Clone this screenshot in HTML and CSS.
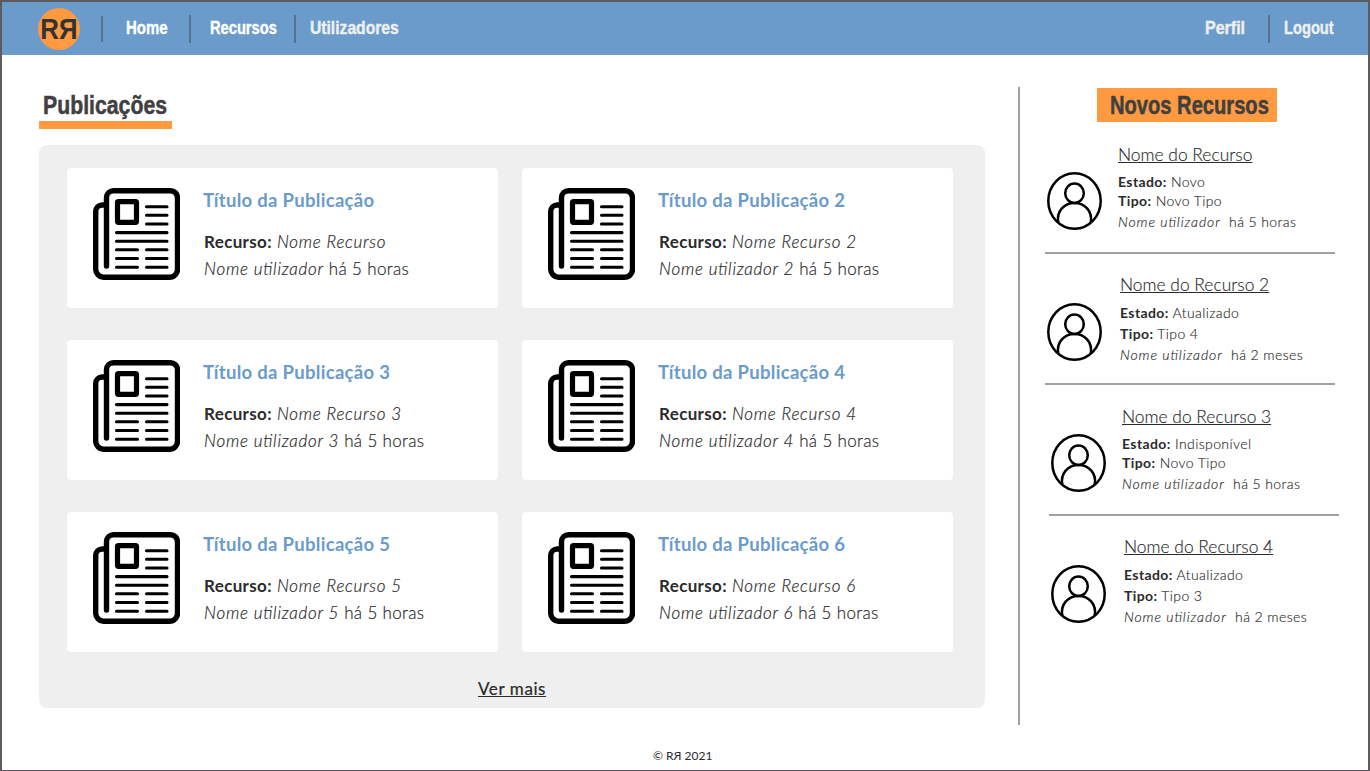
FILE: index.html
```
<!DOCTYPE html>
<html lang="pt">
<head>
<meta charset="utf-8">
<title>Publicações</title>
<link rel="stylesheet" href="styles.css">
</head>
<body>
<svg class="defs" aria-hidden="true">
  <symbol id="news" viewBox="0 0 87 92">
    <g fill="none" stroke="#000" stroke-linecap="round">
      <path stroke-width="5.4" d="M13.5 78V9.5a7 7 0 0 1 7-6.8h57a7 7 0 0 1 7 7V81a8 8 0 0 1-8 8.200H10.500A8 8 0 0 1 2.700 81V23.500a6.500 6.500 0 0 1 6.500-6.500h4"/>
      <rect x="24.500" y="13.700" width="19" height="20.600" rx="1" stroke-width="5.200"/>
      <path stroke-width="3.100" d="M53.500 18.700H74M53.500 27.300H74M53.500 36H74M23.500 44.600H74M23.500 53.200H74M23.500 61.800H44.500M53.500 61.800H74M23.500 70.500H44.500M53.500 70.500H74M23.500 79.200H44.500M53.500 79.200H74"/>
    </g>
  </symbol>
  <symbol id="user" viewBox="0 0 55 58">
    <g fill="none" stroke="#000" stroke-width="2.500">
      <ellipse cx="27.500" cy="29" rx="26.200" ry="27.700"/>
      <ellipse cx="27.500" cy="21.300" rx="9.300" ry="9.700"/>
      <path d="M11.300 50.500C9.200 39.500 17 31 27.500 31S45.800 39.500 43.700 50.500"/>
    </g>
  </symbol>
</svg>
<div class="page">
  <header class="bar">
    <div class="logo"><span>RЯ</span></div>
    <i class="sep s1"></i>
    <a class="nav home"><span>Home</span></a>
    <i class="sep"></i>
    <a class="nav rec"><span>Recursos</span></a>
    <i class="sep"></i>
    <a class="nav util dim"><span>Utilizadores</span></a>
    <a class="nav perfil dim"><span>Perfil</span></a>
    <i class="sep"></i>
    <a class="nav logout dim"><span>Logout</span></a>
  </header>
  <div class="content">
    <main>
      <h1 class="title"><span>Publicações</span></h1>
      <section class="panel">
        <div class="cards">
          <article class="card"><svg class="news"><use href="#news"/></svg><div><h2>Título da Publicação</h2><p class="r"><b>Recurso:</b> <em>Nome Recurso</em></p><p class="u"><em>Nome utilizador</em> há 5 horas</p></div></article>
          <article class="card"><svg class="news"><use href="#news"/></svg><div><h2>Título da Publicação 2</h2><p class="r"><b>Recurso:</b> <em>Nome Recurso 2</em></p><p class="u"><em>Nome utilizador 2</em> há 5 horas</p></div></article>
          <article class="card"><svg class="news"><use href="#news"/></svg><div><h2>Título da Publicação 3</h2><p class="r"><b>Recurso:</b> <em>Nome Recurso 3</em></p><p class="u"><em>Nome utilizador 3</em> há 5 horas</p></div></article>
          <article class="card"><svg class="news"><use href="#news"/></svg><div><h2>Título da Publicação 4</h2><p class="r"><b>Recurso:</b> <em>Nome Recurso 4</em></p><p class="u"><em>Nome utilizador 4</em> há 5 horas</p></div></article>
          <article class="card"><svg class="news"><use href="#news"/></svg><div><h2>Título da Publicação 5</h2><p class="r"><b>Recurso:</b> <em>Nome Recurso 5</em></p><p class="u"><em>Nome utilizador 5</em> há 5 horas</p></div></article>
          <article class="card"><svg class="news"><use href="#news"/></svg><div><h2>Título da Publicação 6</h2><p class="r"><b>Recurso:</b> <em>Nome Recurso 6</em></p><p class="u"><em>Nome utilizador 6</em> há 5 horas</p></div></article>
        </div>
        <a class="more">Ver mais</a>
      </section>
    </main>
    <aside>
      <h1 class="new"><span>Novos Recursos</span></h1>
      <div class="item i1"><svg class="user"><use href="#user"/></svg><div><h3>Nome do Recurso</h3><p><b>Estado:</b> Novo</p><p class="t"><b>Tipo:</b> Novo Tipo</p><p class="w"><em>Nome utilizador</em>&nbsp; há 5 horas</p></div></div>
      <div class="item even i2"><svg class="user"><use href="#user"/></svg><div><h3>Nome do Recurso 2</h3><p><b>Estado:</b> Atualizado</p><p class="t"><b>Tipo:</b> Tipo 4</p><p class="w"><em>Nome utilizador</em>&nbsp; há 2 meses</p></div></div>
      <div class="item shift i3"><svg class="user"><use href="#user"/></svg><div><h3>Nome do Recurso 3</h3><p><b>Estado:</b> Indisponível</p><p class="t"><b>Tipo:</b> Novo Tipo</p><p class="w"><em>Nome utilizador</em>&nbsp; há 5 horas</p></div></div>
      <div class="item even shift i4"><svg class="user"><use href="#user"/></svg><div><h3>Nome do Recurso 4</h3><p><b>Estado:</b> Atualizado</p><p class="t"><b>Tipo:</b> Tipo 3</p><p class="w"><em>Nome utilizador</em>&nbsp; há 2 meses</p></div></div>
    </aside>
  </div>
  <footer>© RЯ 2021</footer>
</div>
</body>
</html>
```
FILE: styles.css
```
* { box-sizing: border-box; margin: 0; padding: 0; }
body { background: #fff; color: #2b2b2b; font-family: Lato, "Open Sans", sans-serif; font-weight: 300; overflow: hidden; }
.defs { display: none; }
.page { width: 1370px; height: 771px; border: 2px solid #5d5b5e; border-bottom-width: 1px; display: flex; flex-direction: column; }
svg { display: block; flex: none; }
h1, h2, h3, p, a { white-space: nowrap; }
.bar { height: 53px; background: #6a9bcb; display: flex; align-items: flex-start; padding-left: 36px; flex: none; }
.logo { width: 42px; height: 42px; margin-top: 6px; border-radius: 50%; background: #ff9a41; display: flex; align-items: center; justify-content: center; font: bold 29px/46px "Liberation Sans", sans-serif; color: #333; }
.logo span { transform: scaleX(.89); }
.sep { width: 2px; height: 28px; margin-top: 13px; background: #57708c; flex: none; }
.s1 { height: 26px; margin: 14px 0 0 21px; }
.nav { height: 28px; margin-top: 12px; font: bold 18px/28px "Liberation Sans Narrow", "Liberation Sans", sans-serif; color: #fff; flex: none; -webkit-text-stroke: .4px; }
.nav span, .title span, .new span { display: inline-block; transform-origin: 0 50%; }
.nav span { transform: scaleX(.83); }
.nav.dim { color: #efefef; }
.home { width: 63px; margin-left: 23px; }
.rec { width: 84px; margin-left: 19px; }
.nav.rec span, .nav.logout span { transform: scaleX(.815); }
.util { width: 895px; margin-left: 14px; }
.util span { transform: scaleX(.87); }
.perfil { width: 63px; }
.perfil span { transform: scaleX(.89); }
.logout { margin-left: 14px; }
.content { display: flex; height: 670px; }
main { width: 1016px; padding: 34px 0 0 37px; flex: none; }
.title { width: 133px; height: 40px; border-bottom: 8px solid #ff9a41; padding-left: 4px; }
.title, .new { font: bold 25px/32px "Liberation Sans Narrow", "Liberation Sans", sans-serif; color: #404040; -webkit-text-stroke: .5px; }
.title span { transform: scaleX(.85); }
.new span { transform: scaleX(.805); }
.panel { width: 946px; height: 563px; margin-top: 16px; padding: 23px 28px 0; border-radius: 8px; background: #efefef; }
.cards { display: grid; grid-template-columns: 431px 431px; grid-auto-rows: 140px; gap: 32px 24px; }
.card { display: flex; gap: 23px; padding: 20px 0 0 26px; background: #fff; border-radius: 4px; }
.news { width: 87px; height: 92px; }
.card h2 { margin-top: -1px; font-size: 18.500px; line-height: 26px; font-weight: 700; letter-spacing: .3px; color: #6a9bcb; }
.card p { font-size: 17px; line-height: 27px; padding-left: 1px; letter-spacing: .35px; -webkit-text-stroke: .2px; font-feature-settings: "liga"; }
.card .r { margin-top: 15px; }
em { letter-spacing: .75px; }
b { font-weight: 700; -webkit-text-stroke: 0; }
.more { display: block; width: max-content; margin: 25px 0 0 411px; font-size: 17px; line-height: 24px; font-weight: 400; letter-spacing: .6px; text-decoration: underline; -webkit-text-stroke: .2px; }
aside { width: 321px; height: 638px; margin-top: 32px; border-left: 2px solid #a0a0a0; padding: 1px 0 0 25px; flex: none; }
.new { width: 180px; height: 34px; margin-left: 52px; padding-left: 13px; line-height: 34px; background: #ff9a41; }
.item { width: 290px; height: 131px; border-bottom: 2px solid #a0a0a0; display: flex; padding-left: 2px; }
.new + .item { margin-top: 1px; }
.item.i4 { border-bottom: 0; }
.shift { margin-left: 4px; }
.user { width: 55px; height: 58px; margin: 49px 16px 0 0; }
.i2 .user, .i4 .user { margin-right: 18px; }
.item h3 { font-size: 17.400px; line-height: 24px; font-weight: 300; text-decoration: underline; margin-top: 20px; -webkit-text-stroke: .15px; }
.item p { font-size: 14px; line-height: 20px; letter-spacing: .4px; -webkit-text-stroke: .15px; font-feature-settings: "liga"; }
.item em { letter-spacing: .9px; }
.item h3 + p { margin-top: 5px; }
.item .t { margin-top: -1px; }
.item .w { margin-top: 1px; }
.item.even h3 { margin-top: 19px; }
.item.even h3 + p { margin-top: 6px; }
.item.even .t { margin-top: 1px; }
footer { height: 20px; margin-top: 21px; padding-left: 651px; font-size: 12px; line-height: 20px; font-weight: 400; }
```
